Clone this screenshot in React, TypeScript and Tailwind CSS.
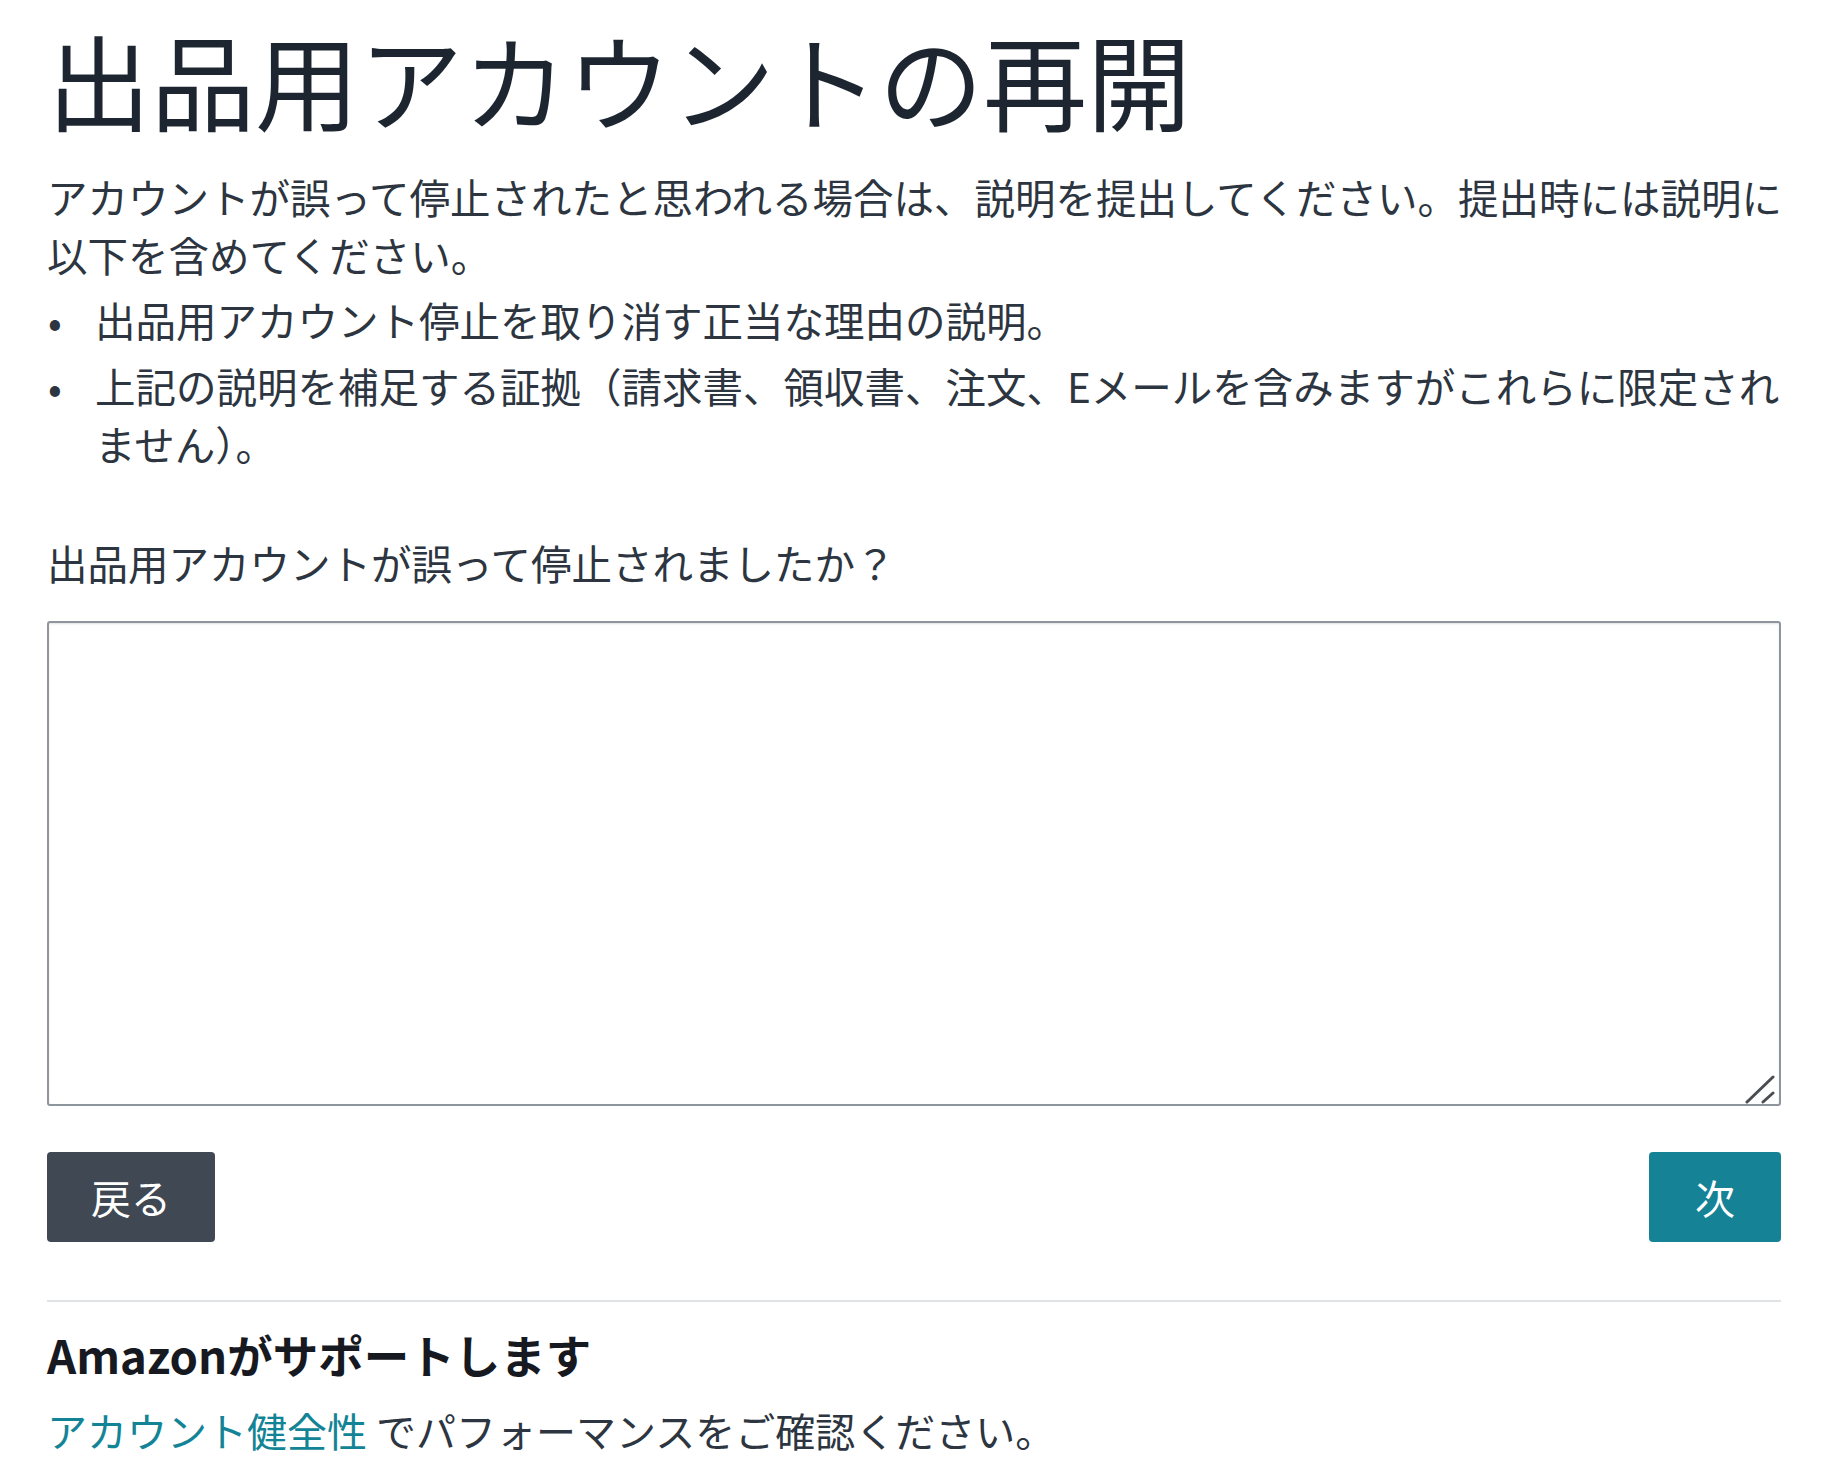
import React from "react";

const font = { fontFamily: '"Noto Sans CJK JP", "Noto Sans", sans-serif' };

export default function App() {
  return (
    <div
      className="min-h-[1478px] bg-white pl-[47px] pr-[41px] pt-[17px] text-[#232f3e]"
      style={font}
    >
      <h1 className="text-[104px] font-normal leading-[124px] text-[#1c2530]">
        出品用アカウントの再開
      </h1>

      <p className="mr-[-14px] mt-[27px] text-[40.5px] leading-[58px] text-[#2c3540]">
        アカウントが誤って停止されたと思われる場合は、説明を提出してください。提出時には説明に以下を含めてください。
      </p>

      <ul className="mr-[-14px] mt-[7px] flex flex-col gap-[8px] text-[40.5px] leading-[58px] text-[#2c3540]">
        <li className="flex">
          <span className="w-[48px] shrink-0 pl-[1px]">•</span>
          <span>出品用アカウント停止を取り消す正当な理由の説明。</span>
        </li>
        <li className="flex">
          <span className="w-[48px] shrink-0 pl-[1px]">•</span>
          <span>
            上記の説明を補足する証拠（請求書、領収書、注文、Eメールを含みますがこれらに限定されません）。
          </span>
        </li>
      </ul>

      <label className="mt-[61px] block text-[40.5px] leading-[58px] text-[#2c3540]">
        出品用アカウントが誤って停止されましたか？
      </label>

      <div className="relative mt-[29px]">
        <textarea
          className="block h-[485px] w-full resize-none rounded-[3px] border-2 border-[#8f959c] bg-white shadow-[inset_0_1px_2px_rgba(15,17,17,0.12)] outline-none"
          aria-label="説明"
        />
        <svg
          className="pointer-events-none absolute bottom-[1px] right-[6px]"
          width="30"
          height="30"
          viewBox="0 0 30 30"
        >
          <line x1="2" y1="27" x2="28" y2="2" stroke="#4a4d52" strokeWidth="3" strokeLinecap="round" />
          <line x1="18" y1="27" x2="28" y2="18" stroke="#4a4d52" strokeWidth="3" strokeLinecap="round" />
        </svg>
      </div>

      <div className="mt-[46px] flex items-center justify-between">
        <button className="h-[90px] rounded-[4px] bg-[#3f4853] px-[44px] text-[40px] leading-[58px] text-white">
          戻る
        </button>
        <button className="h-[90px] rounded-[4px] bg-[#168295] px-[46px] text-[40px] leading-[58px] text-white">
          次
        </button>
      </div>

      <div className="mt-[58px] h-[2px] w-full bg-[#e0e3e6]" />

      <h2 className="mt-[23px] text-[45.5px] font-bold leading-[58px] text-[#16191f]">
        Amazonがサポートします
      </h2>

      <p className="mt-[18px] text-[40px] leading-[58px] text-[#2c3540]">
        <a className="text-[#138496]">アカウント健全性</a> でパフォーマンスをご確認ください。
      </p>
    </div>
  );
}
